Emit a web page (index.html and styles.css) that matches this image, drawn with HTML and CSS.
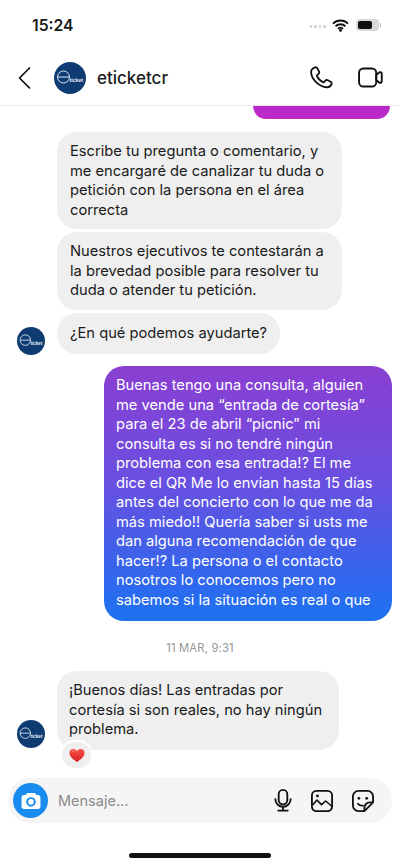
FILE: index.html
```html
<!DOCTYPE html>
<html lang="es">
<head>
<meta charset="utf-8">
<title>eticketcr</title>
<link rel="stylesheet" href="styles.css">
</head>
<body>
<main class="phone">
  <div class="status">
    <span class="time">15:24</span>
    <div class="status-right">
      <span class="dots"><i></i><i></i><i></i><i></i></span>
      <svg class="wifi" width="17" height="13" viewBox="0 0 17 13"><path d="M1 4.600a10.600 10.600 0 0 1 15 0M3.600 7.300a7 7 0 0 1 9.800 0M6.100 9.800a3.400 3.400 0 0 1 4.800 0" fill="none" stroke="#111" stroke-width="1.900"/><circle cx="8.500" cy="11.200" r="1.500" fill="#111"/></svg>
      <span class="battery"><span class="charge"></span></span>
      <span class="nub"></span>
    </div>
  </div>
  <header class="topbar">
    <svg class="back" width="13" height="24" viewBox="0 0 13 24"><path d="M11.500 2 1.500 12l10 10" fill="none" stroke="#111" stroke-width="1.700" stroke-linecap="round" stroke-linejoin="round"/></svg>
    <svg class="head-logo" width="32" height="32" viewBox="0 0 32 32"><circle cx="16" cy="16" r="16" fill="#0e3b72"/><circle cx="9.500" cy="15" r="6" fill="none" stroke="#dfe8f2" stroke-width="1"/><path d="M4 15H15" stroke="#dfe8f2" stroke-width="1"/><text x="15.500" y="20" font-family="Liberation Sans, sans-serif" font-size="5.200" font-weight="700" fill="#e8eef5">ticket</text></svg>
    <span class="name">eticketcr</span>
    <svg class="phone-ic" width="24" height="24" viewBox="0 0 26 26"><path d="M6.600 1.600c1-.4 2 0 2.500 1l1.700 3.200c.5 1 .3 2-.5 2.700L9 9.600c-.4.4-.5.9-.3 1.400 1.200 2.800 3.500 5.200 6.400 6.500.5.200 1 .1 1.400-.3l1.200-1.300c.7-.8 1.800-1 2.700-.5l3 1.700c1 .6 1.400 1.600 1 2.600-.8 2-2.700 3.500-5 3.300C10.500 22.400 2.700 14 2.300 7c-.2-2.400 2.200-4.600 4.300-5.400Z" fill="none" stroke="#111" stroke-width="2" stroke-linejoin="round"/></svg>
    <svg class="video-ic" width="25" height="21" viewBox="0 0 26 22"><rect x="1" y="1.500" width="18" height="19" rx="4.500" fill="none" stroke="#111" stroke-width="2"/><path d="M19 8.500 22 5.800c1-.9 2.800-.3 2.800 1.200v8c0 1.500-1.800 2.100-2.800 1.200L19 13.500Z" fill="none" stroke="#111" stroke-width="2" stroke-linejoin="round"/></svg>
  </header>
  <section class="chat">
    <div class="stub"></div>
    <div class="bubble in first">Escribe tu pregunta o comentario, y me encargaré de canalizar tu duda o petición con la persona en el área correcta</div>
    <div class="bubble in">Nuestros ejecutivos te contestarán a la brevedad posible para resolver tu duda o atender tu petición.</div>
    <div class="row">
      <svg class="avatar" width="28" height="28" viewBox="0 0 32 32"><circle cx="16" cy="16" r="16" fill="#0e3b72"/><circle cx="9.500" cy="15" r="6" fill="none" stroke="#dfe8f2" stroke-width="1"/><path d="M4 15H15" stroke="#dfe8f2" stroke-width="1"/><text x="15.500" y="20" font-family="Liberation Sans, sans-serif" font-size="5.200" font-weight="700" fill="#e8eef5">ticket</text></svg>
      <div class="bubble in short">¿En qué podemos ayudarte?</div>
    </div>
    <div class="bubble out">Buenas tengo una consulta, alguien me vende una “entrada de cortesía” para el 23 de abril “picnic” mi consulta es si no tendré ningún problema con esa entrada!? El me dice el QR Me lo envían hasta 15 días antes del concierto con lo que me da más miedo!! Quería saber si usts me dan alguna recomendación de que hacer!? La persona o el contacto nosotros lo conocemos pero no sabemos si la situación es real o que</div>
    <div class="date">11 MAR, 9:31</div>
    <div class="row last">
      <svg class="avatar" width="28" height="28" viewBox="0 0 32 32"><circle cx="16" cy="16" r="16" fill="#0e3b72"/><circle cx="9.500" cy="15" r="6" fill="none" stroke="#dfe8f2" stroke-width="1"/><path d="M4 15H15" stroke="#dfe8f2" stroke-width="1"/><text x="15.500" y="20" font-family="Liberation Sans, sans-serif" font-size="5.200" font-weight="700" fill="#e8eef5">ticket</text></svg>
      <div class="bubble in reply">¡Buenos días! Las entradas por cortesía si son reales, no hay ningún problema.
        <span class="reaction"><svg width="16" height="15" viewBox="0 0 17 15"><defs><linearGradient id="heart" x1="0" y1="0" x2="0" y2="1"><stop offset="0" stop-color="#f8514a"/><stop offset="1" stop-color="#d81f1f"/></linearGradient></defs><path d="M8.500 14.500C3 10.500.5 8 .5 4.800.5 2.300 2.400.6 4.500.6c1.700 0 3.100.9 4 2.500.9-1.600 2.300-2.500 4-2.500 2.100 0 4 1.700 4 4.200 0 3.200-2.500 5.700-8 9.700Z" fill="url(#heart)"/><path d="M3 3.600c.6-.8 1.500-1 2.200-.7" fill="none" stroke="#ff9f9f" stroke-width="1" stroke-linecap="round"/></svg></span>
      </div>
    </div>
  </section>
  <div class="composer">
    <span class="camera"><svg width="20" height="18" viewBox="0 0 22 20"><path d="M7.500 1h7c.8 0 1.300.4 1.600 1l.8 1.400H19c1.300 0 2.500 1.100 2.500 2.600v10.500c0 1.400-1.200 2.500-2.500 2.500H3c-1.300 0-2.500-1.100-2.500-2.500V6C.5 4.500 1.700 3.400 3 3.400h2.100L5.900 2c.3-.6.800-1 1.600-1Z" fill="#fff"/><circle cx="11" cy="11" r="4.200" fill="none" stroke="#1a8cf0" stroke-width="2.200"/></svg></span>
    <span class="placeholder">Mensaje...</span>
    <svg class="tool" width="18" height="23" viewBox="0 0 18 24"><rect x="4.500" y="1" width="9" height="15" rx="4.500" fill="none" stroke="#111" stroke-width="1.900"/><path d="M1 10.500a8 8 0 0 0 16 0M9 18.500V22M4 22.500h10" fill="none" stroke="#111" stroke-width="1.900" stroke-linecap="round"/></svg>
    <svg class="tool" width="22" height="22" viewBox="0 0 24 24"><rect x="1" y="1" width="22" height="22" rx="5" fill="none" stroke="#111" stroke-width="2"/><circle cx="7" cy="6.500" r="1.500" fill="#111"/><path d="M1.500 16.500 6.500 11l5 5 4.500-4 7 6" fill="none" stroke="#111" stroke-width="1.700" stroke-linejoin="round"/></svg>
    <svg class="tool" width="22" height="22" viewBox="0 0 24 24"><path d="M7 1h10a6 6 0 0 1 6 6v6.500L13.500 23H7a6 6 0 0 1-6-6V7a6 6 0 0 1 6-6Z" fill="none" stroke="#111" stroke-width="2" stroke-linejoin="round"/><path d="M13.500 23v-3.500a6 6 0 0 1 6-6H23" fill="none" stroke="#111" stroke-width="2"/><circle cx="7.500" cy="9" r="1.500" fill="#111"/><circle cx="16" cy="9" r="1.500" fill="#111"/><path d="M6.500 15c1.400 1.800 3.200 2.400 5.500 2" fill="none" stroke="#111" stroke-width="2" stroke-linecap="round"/></svg>
  </div>
  <div class="home"><span class="home-bar"></span></div>
</main>
</body>
</html>
```
FILE: styles.css
```css
* { box-sizing: border-box; }
html, body { margin: 0; padding: 0; background: #fff; }
body { width: 400px; height: 866px; overflow: hidden; font-family: Inter, "Liberation Sans", sans-serif; color: #161616; }
.phone { display: flex; flex-direction: column; width: 400px; height: 866px; }

.status { display: flex; align-items: center; justify-content: space-between; height: 50px; padding: 0 19px 0 32px; flex: none; }
.time { font-size: 15.700px; font-weight: 600; color: #1a1a1a; }
.status-right { display: flex; align-items: center; }
.dots { display: flex; gap: 2px; margin-right: 6px; margin-top: 3px; }
.dots i { width: 2.500px; height: 2.500px; border-radius: 50%; background: #d0d0d0; }
.wifi { margin-right: 7px; }
.battery { display: block; width: 23px; height: 12px; border-radius: 3.500px; background: #d9d9d9; padding: 2px; }
.charge { display: block; width: 14px; height: 8px; border-radius: 2px; background: #111; }
.nub { width: 1.500px; height: 4px; background: #bdbdbd; margin-left: 1px; }

.topbar { display: flex; align-items: center; height: 56px; flex: none; padding: 0 17px 0 18px; border-bottom: 1px solid #ececec; }
.head-logo { margin-left: 23px; flex: none; }
.name { font-size: 17px; font-weight: 500; margin-left: 11px; flex: 1; color: #1c1c1c; }
.phone-ic { margin-right: 25px; }

.chat { flex: 1; min-height: 0; display: flex; flex-direction: column; align-items: flex-start; overflow: hidden; }
.stub { width: 137px; height: 13px; margin-left: 253px; flex: none; background: #bb2ac8; border-radius: 0 0 20px 20px; }
.bubble { font-size: 14.700px; line-height: 19.500px; border-radius: 20px; flex: none; }
.in { background: #efefef; margin-left: 57px; width: 285px; padding: 10px 13px 9.500px; color: #1a1a1a; }
.first { margin-top: 13px; margin-bottom: 3px; padding-bottom: 9px; }
.row { display: flex; align-items: flex-end; margin-top: 3px; padding-left: 17px; }
.row .in { margin-left: 12px; }
.avatar { flex: none; margin-bottom: -1px; }
.short { width: auto; padding: 11px 13px 10.500px; }
.out { width: 288px; height: 255px; margin: 12px 0 0 104px; padding: 10px 12px; color: #fff; background: linear-gradient(180deg, #8a3fd2 0%, #6a4fe0 45%, #2f68ee 85%, #1c72f0 100%); }
.date { width: 100%; text-align: center; font-size: 11.200px; color: #969696; margin-top: 20px; line-height: 14px; letter-spacing: .2px; }
.last { margin-top: 16px; }
.last .avatar { margin-bottom: 2px; }
.reply { position: relative; width: 282px; height: 79px; padding: 10px 12px; margin-left: 13px; }
.reaction { position: absolute; left: 3px; bottom: -20px; width: 33px; height: 30px; display: flex; align-items: center; justify-content: center; background: #efefef; border: 2px solid #fff; border-radius: 15px; }

.composer { display: flex; align-items: center; flex: none; width: 384px; height: 45px; margin: 0 8px 0; padding: 0 18px 0 5px; background: #f5f5f5; border-radius: 23px; }
.camera { width: 35px; height: 35px; flex: none; border-radius: 50%; background: #1a8cf0; display: flex; align-items: center; justify-content: center; }
.placeholder { flex: 1; margin-left: 10px; font-size: 14.500px; color: #8a8a8a; }
.tool { flex: none; margin-left: 19px; }

.home { height: 43px; flex: none; display: flex; justify-content: center; padding-top: 30px; }
.home-bar { width: 142px; height: 5px; border-radius: 3px; background: #111; }
```
